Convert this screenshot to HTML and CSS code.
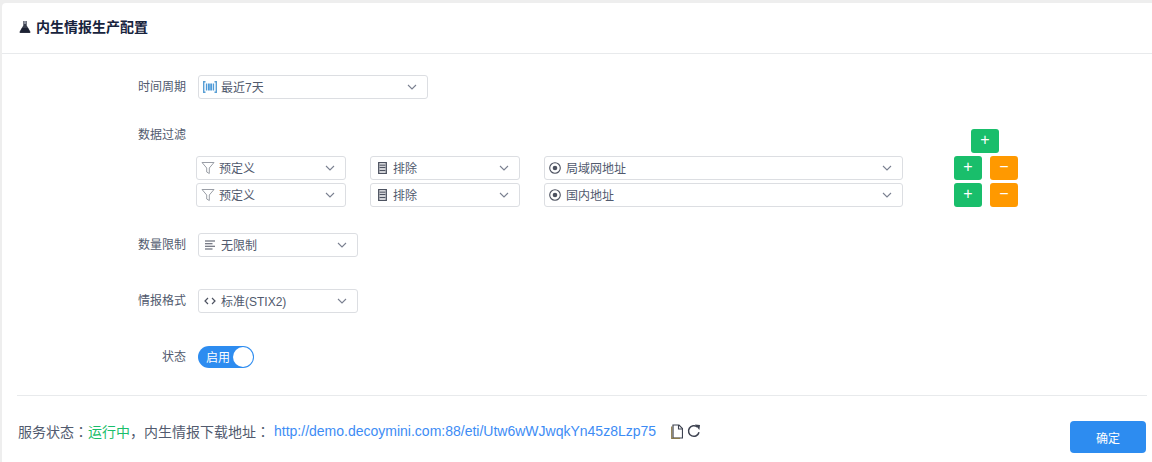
FILE: index.html
```html
<!DOCTYPE html>
<html lang="zh">
<head>
<meta charset="utf-8">
<title>内生情报生产配置</title>
<link rel="stylesheet" href="styles.css">
</head>
<body>
<main class="card">
  <header class="card-head">
    <svg class="flask" viewBox="0 0 14 14"><path d="M5.300 1h3.400v4.500l3.600 6c.4.800 0 1.500-.8 1.500H2.500c-.8 0-1.200-.7-.8-1.500l3.600-6z" fill="#3a3f4e"/><path d="M4 8h6l2 4.500H2z" fill="#1d2233"/><path d="M6 1h2v3H6z" fill="#8a8f9c"/></svg>
    <h1>内生情报生产配置</h1>
  </header>
  <form class="form">
    <div class="row row-time">
      <label class="label">时间周期</label>
      <div class="select w230">
        <svg class="ico ico-w" viewBox="0 0 14 12"><path d="M2.500 .8H.7v10.400h1.800M11.500 .8h1.800v10.400h-1.800" fill="none" stroke="#5a9fd4" stroke-width="1.400"/><path d="M3.500 2.500v7M5.500 2.500v7M7 2.500v7M8.500 2.500v7M10.500 2.500v7" stroke="#4f9bd9" stroke-width="1.300"/></svg>
        <span class="val">最近7天</span>
        <svg class="caret" viewBox="0 0 10 6"><path d="M1 1l4 4 4-4" fill="none" stroke="#7a8090" stroke-width="1.100"/></svg>
      </div>
    </div>
    <div class="filter">
      <div class="filter-top">
        <label class="label">数据过滤</label>
        <div class="add-col"><button type="button" class="btn green">+</button></div>
      </div>
      <div class="filter-row">
        <div class="select w150">
          <svg class="ico ico-f" viewBox="0 0 14 14"><path d="M1 1.500h12L8.300 7v5.500L5.700 11V7z" fill="none" stroke="#9a9ea6" stroke-width="1"/></svg>
          <span class="val">预定义</span>
          <svg class="caret" viewBox="0 0 10 6"><path d="M1 1l4 4 4-4" fill="none" stroke="#7a8090" stroke-width="1.100"/></svg>
        </div>
        <div class="select w150">
          <svg class="ico ico-s" viewBox="0 0 9 12"><path d="M.7.700h7.600v10.600H.7z" fill="none" stroke="#4d5260" stroke-width="1.300"/><path d="M1.500 3.200h6M1.500 5.500h6M1.500 8.500h6" stroke="#4d5260" stroke-width="1.300"/></svg>
          <span class="val">排除</span>
          <svg class="caret" viewBox="0 0 10 6"><path d="M1 1l4 4 4-4" fill="none" stroke="#7a8090" stroke-width="1.100"/></svg>
        </div>
        <div class="select w359">
          <svg class="ico ico-t" viewBox="0 0 12 12"><circle cx="6" cy="6" r="5.300" fill="none" stroke="#4d5260" stroke-width="1.100"/><circle cx="6" cy="6" r="2.300" fill="#4d5260"/></svg>
          <span class="val">局域网地址</span>
          <svg class="caret" viewBox="0 0 10 6"><path d="M1 1l4 4 4-4" fill="none" stroke="#7a8090" stroke-width="1.100"/></svg>
        </div>
        <div class="btns">
          <button type="button" class="btn green">+</button>
          <button type="button" class="btn orange">−</button>
        </div>
      </div>
      <div class="filter-row">
        <div class="select w150">
          <svg class="ico ico-f" viewBox="0 0 14 14"><path d="M1 1.500h12L8.300 7v5.500L5.700 11V7z" fill="none" stroke="#9a9ea6" stroke-width="1"/></svg>
          <span class="val">预定义</span>
          <svg class="caret" viewBox="0 0 10 6"><path d="M1 1l4 4 4-4" fill="none" stroke="#7a8090" stroke-width="1.100"/></svg>
        </div>
        <div class="select w150">
          <svg class="ico ico-s" viewBox="0 0 9 12"><path d="M.7.700h7.600v10.600H.7z" fill="none" stroke="#4d5260" stroke-width="1.300"/><path d="M1.500 3.200h6M1.500 5.500h6M1.500 8.500h6" stroke="#4d5260" stroke-width="1.300"/></svg>
          <span class="val">排除</span>
          <svg class="caret" viewBox="0 0 10 6"><path d="M1 1l4 4 4-4" fill="none" stroke="#7a8090" stroke-width="1.100"/></svg>
        </div>
        <div class="select w359">
          <svg class="ico ico-t" viewBox="0 0 12 12"><circle cx="6" cy="6" r="5.300" fill="none" stroke="#4d5260" stroke-width="1.100"/><circle cx="6" cy="6" r="2.300" fill="#4d5260"/></svg>
          <span class="val">国内地址</span>
          <svg class="caret" viewBox="0 0 10 6"><path d="M1 1l4 4 4-4" fill="none" stroke="#7a8090" stroke-width="1.100"/></svg>
        </div>
        <div class="btns">
          <button type="button" class="btn green">+</button>
          <button type="button" class="btn orange">−</button>
        </div>
      </div>
    </div>
    <div class="row row-limit">
      <label class="label">数量限制</label>
      <div class="select w160">
        <svg class="ico" viewBox="0 0 12 12"><path d="M1 2h10M1 4.700h7.500M1 7.300h10M1 10h7.500" stroke="#4d5260" stroke-width="1.100"/></svg>
        <span class="val">无限制</span>
        <svg class="caret" viewBox="0 0 10 6"><path d="M1 1l4 4 4-4" fill="none" stroke="#7a8090" stroke-width="1.100"/></svg>
      </div>
    </div>
    <div class="row row-format">
      <label class="label">情报格式</label>
      <div class="select w160">
        <svg class="ico" viewBox="0 0 12 12"><path d="M4 3L1 6l3 3M8 3l3 3-3 3" fill="none" stroke="#4d5260" stroke-width="1.200"/></svg>
        <span class="val">标准(STIX2)</span>
        <svg class="caret" viewBox="0 0 10 6"><path d="M1 1l4 4 4-4" fill="none" stroke="#7a8090" stroke-width="1.100"/></svg>
      </div>
    </div>
    <div class="row row-state">
      <label class="label">状态</label>
      <div class="switch"><span class="switch-text">启用</span><i class="knob"></i></div>
    </div>
  </form>
  <footer class="foot">
    <p class="status">
      <span>服务状态<span class="punct" lang="zh-Hant">：</span></span><span class="ok">运行中</span><span>，内生情报下载地址<span class="punct" lang="zh-Hant">：</span></span>
      <a class="link">http://demo.decoymini.com:88/eti/Utw6wWJwqkYn45z8Lzp75</a>
      <svg class="tool tool-doc" viewBox="0 0 12 15"><path d="M2 14h9.500V4.500L8 1H2z" fill="#fff" stroke="#3d4250" stroke-width="1.200"/><path d="M7.500 1v4h4" fill="none" stroke="#3d4250" stroke-width="1.100"/><path d="M.7 2.500V14.300H9" fill="none" stroke="#8a7a4a" stroke-width="1.200"/></svg>
      <svg class="tool" viewBox="0 0 14 14"><path d="M12 8.300A5.300 5.300 0 1 1 10.300 3" fill="none" stroke="#3d4250" stroke-width="1.500"/><path d="M8 .5l5 .6-.6 5z" fill="#3d4250"/></svg>
    </p>
    <button type="button" class="ok-btn">确定</button>
  </footer>
</main>
</body>
</html>
```
FILE: styles.css
```css
* { box-sizing: border-box; }
html, body { margin: 0; height: 100%; }
body {
  background: #eeeeee;
  padding: 3px 0 0 2px;
  font-family: "Liberation Sans", "Noto Sans CJK SC", sans-serif;
  font-size: 12px;
  color: #515a6e;
  overflow: hidden;
}
.card {
  background: #fff;
  height: 459px;
  border-top-left-radius: 4px;
  display: flex;
  flex-direction: column;
}
.card-head {
  height: 51px;
  border-bottom: 1px solid #e8eaec;
  display: flex;
  align-items: center;
  padding: 0 0 2px 16px;
  gap: 4px;
  flex: none;
}
.flask { width: 14px; height: 14px; }
.card-head h1 {
  margin: 0 0 2px;
  font-size: 14px;
  font-weight: 700;
  color: #17233d;
}
.form {
  padding-top: 21px;
  height: 342px;
  border-bottom: 1px solid #e8eaec;
  margin: 0 5px 0 15px;
  flex: none;
}
.row { display: flex; align-items: center; }
.label {
  width: 169px;
  text-align: right;
  padding-bottom: 4px;
  margin-right: 12px;
  flex: none;
  font-size: 12px;
  color: #515a6e;
}
.select {
  height: 24px;
  border: 1px solid #dcdee2;
  border-radius: 3px;
  background: #fff;
  display: flex;
  align-items: center;
  padding: 0 10px 0 4px;
  flex: none;
}
.w230 { width: 230px; }
.w160 { width: 160px; }
.w150 { width: 150px; }
.w359 { width: 359px; }
.ico { width: 14px; height: 12px; flex: none; margin-right: 4px; }
.ico-f { width: 14px; height: 14px; margin: 0 4px 0 0; }
.ico-s { width: 9px; height: 12px; margin: 0 6px 0 3px; }
.ico-t { width: 12px; height: 12px; margin: 0 5px 0 0; }
.val { flex: 1; white-space: nowrap; font-size: 12px; color: #515a6e; padding-bottom: 2px; }
.caret { width: 10px; height: 6px; flex: none; }
.filter { margin-top: 30px; }
.filter-top { display: flex; align-items: flex-start; height: 24px; }
.filter-top .label { margin: -4px 0 0; padding: 0; }
.add-col { margin-left: 785px; }
.filter-row {
  display: flex;
  align-items: center;
  margin: 3px 0 0 179px;
  gap: 24px;
}
.filter-row .w359 + .btns { margin-left: 27px; }
.btns { display: flex; gap: 8px; }
.btn {
  width: 28px;
  height: 24px;
  padding: 0 0 2px;
  border: 0;
  border-radius: 3px;
  color: #fff;
  font-size: 16px;
  font-family: "Liberation Sans", sans-serif;
  font-weight: 400;
  line-height: 22px;
}
.green { background: #19be6b; }
.orange { background: #ff9900; }
.row-limit { margin-top: 26px; }
.row-format { margin-top: 32px; }
.row-state { margin-top: 33px; }
.switch {
  width: 56px;
  height: 22px;
  border-radius: 11px;
  background: #2d8cf0;
  color: #fff;
  display: flex;
  align-items: center;
  justify-content: space-between;
  padding: 0 1px 0 8px;
  font-size: 12px;
}
.switch-text { padding-bottom: 2px; }
.knob { width: 20px; height: 20px; border-radius: 50%; background: #fff; }
.foot {
  display: flex;
  justify-content: space-between;
  align-items: flex-start;
  padding: 25px 6px 0 16px;
}
.status {
  margin: 0;
  display: flex;
  align-items: center;
  height: 20px;
  font-size: 14px;
  color: #515a6e;
}
.punct { font-family: "Noto Sans CJK TC", sans-serif; }
.ok { color: #19be6b; }
.link { color: #3d8cf5; margin-left: 4px; margin-right: 15px; }
.tool { width: 12px; height: 15px; flex: none; }
.tool + .tool { width: 14px; height: 14px; }
.tool-doc { margin-right: 4px; }
.ok-btn {
  width: 76px;
  height: 32px;
  border: 0;
  border-radius: 4px;
  background: #2d8cf0;
  color: #fff;
  font-size: 12px;
  font-family: "Liberation Sans", "Noto Sans CJK SC", sans-serif;
}
```
